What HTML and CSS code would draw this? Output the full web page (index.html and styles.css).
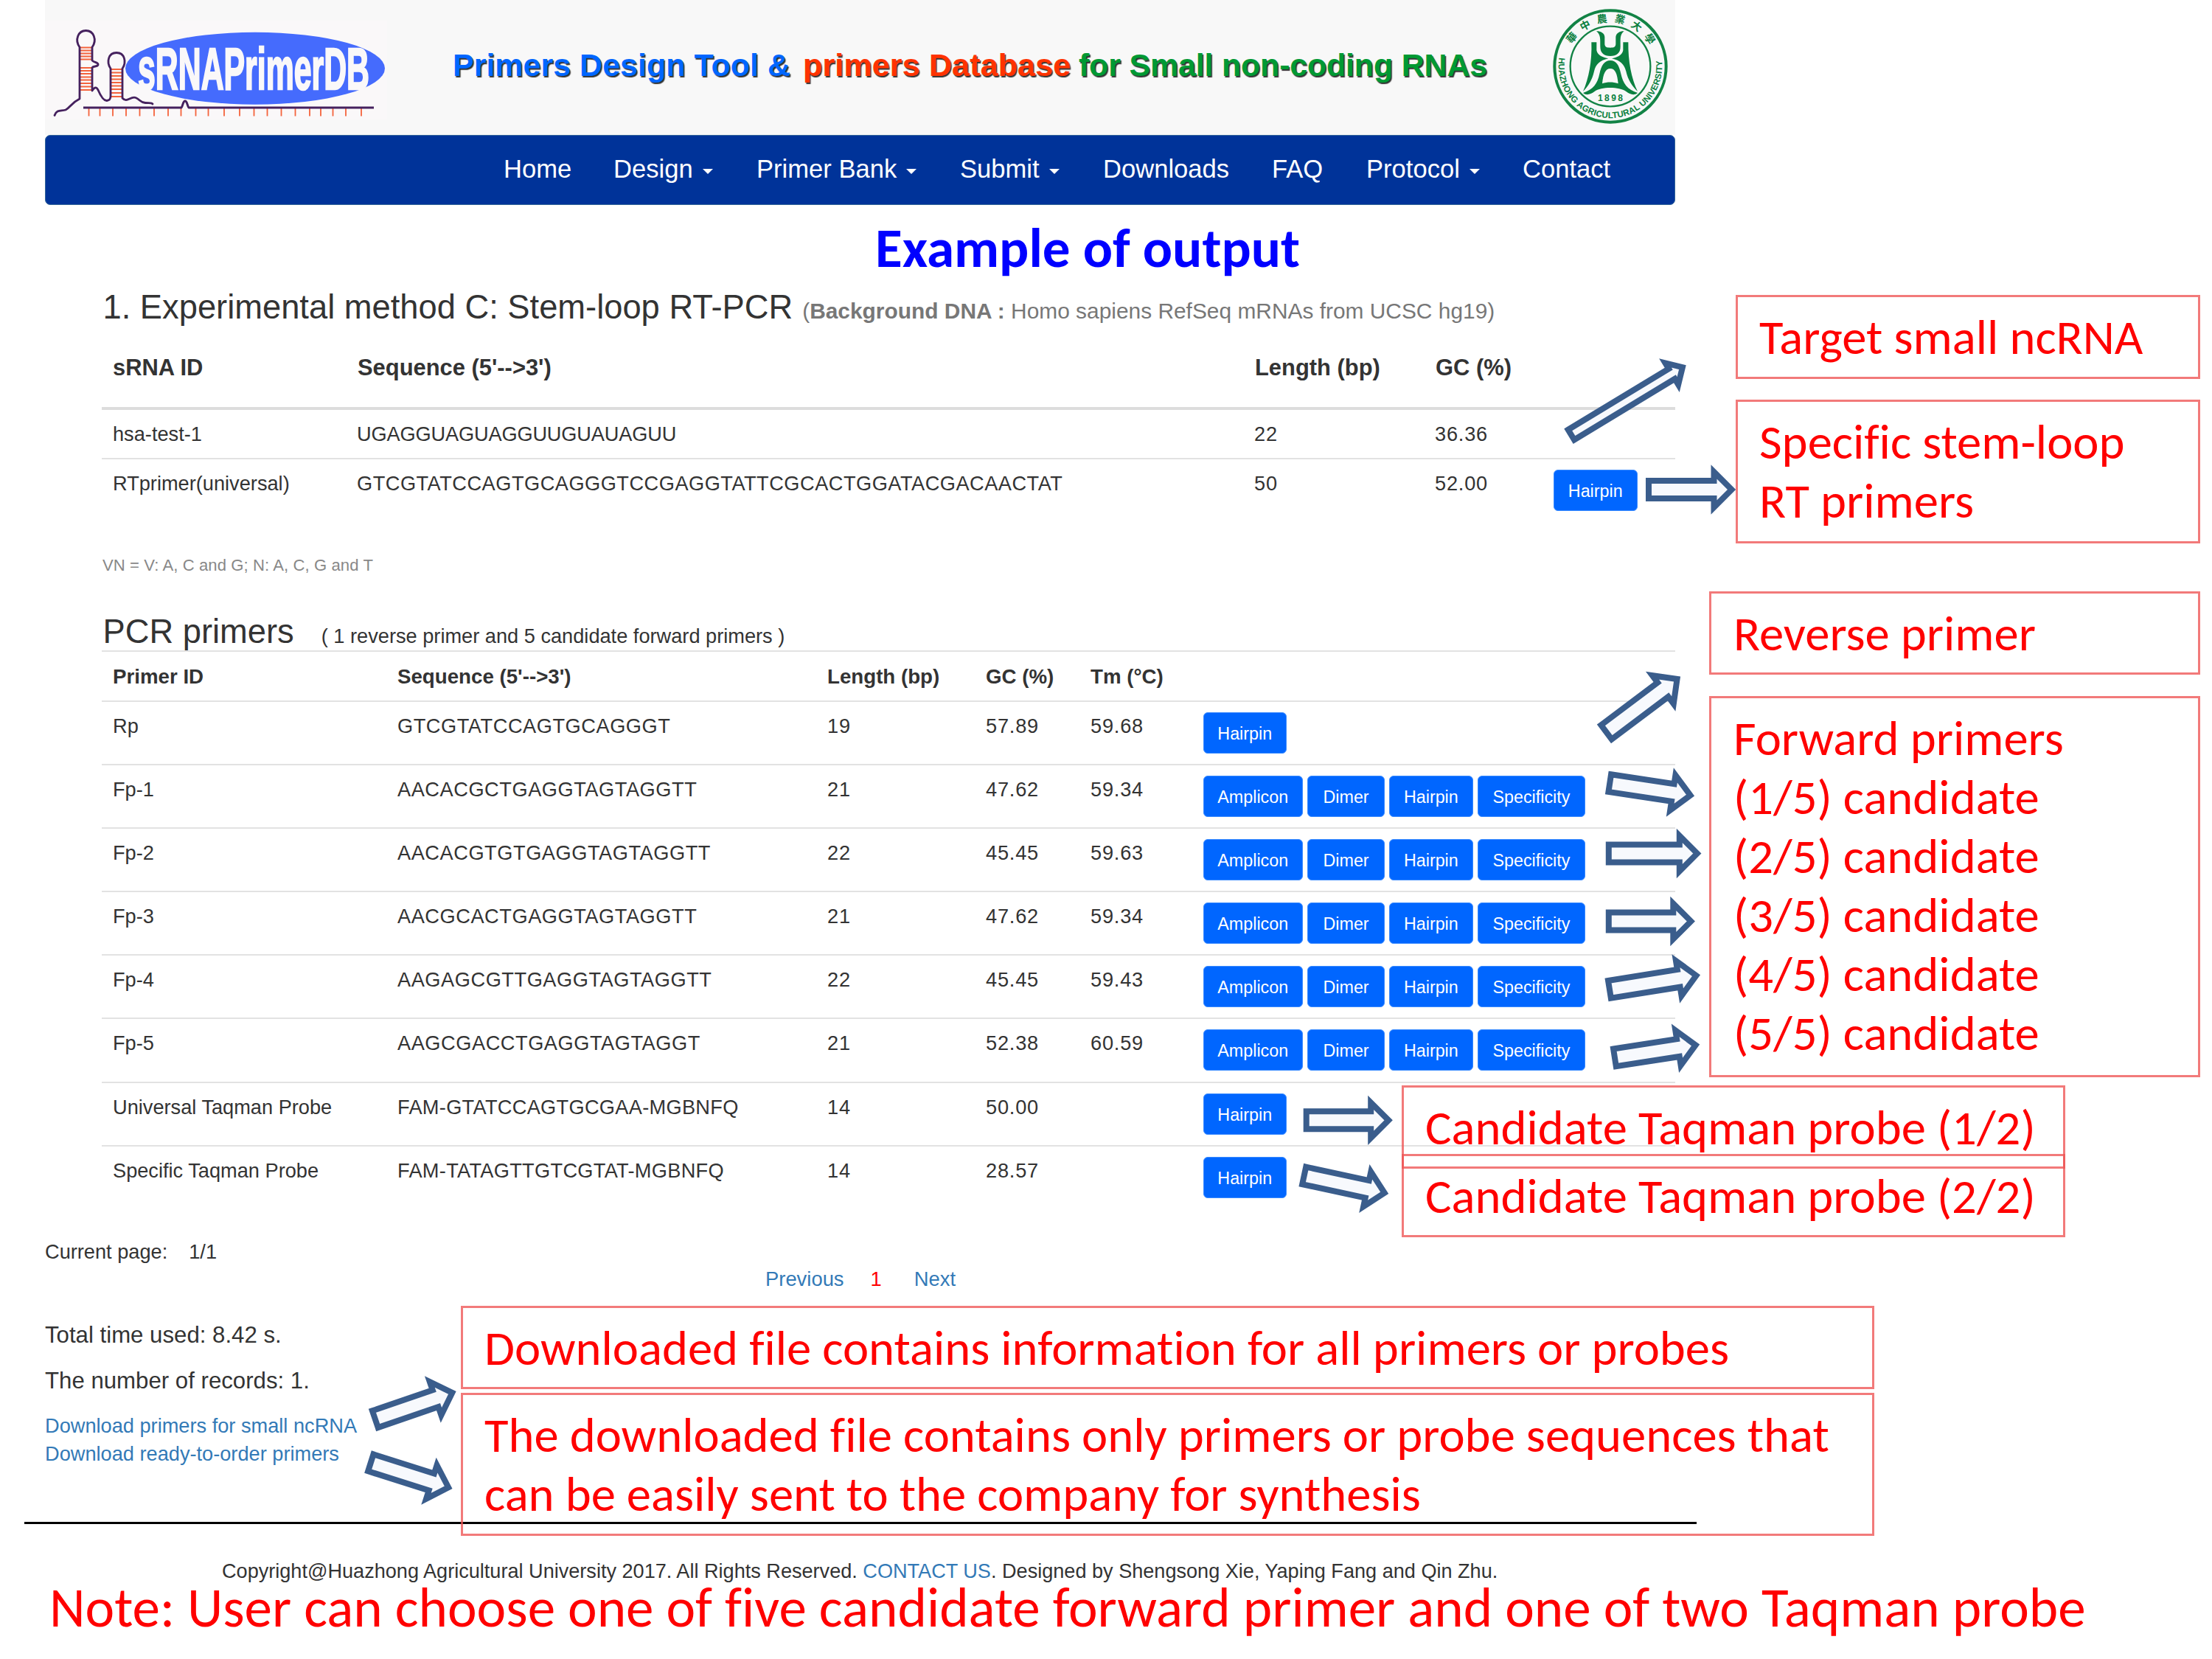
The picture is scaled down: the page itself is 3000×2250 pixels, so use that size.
FILE: index.html
```
<!DOCTYPE html>
<html lang="en">
<head>
<meta charset="utf-8">
<title>sRNAPrimerDB - Example of output</title>
<link rel="stylesheet" href="styles.css">
</head>
<body>
<div class="page">
  <div class="site">
    <header class="banner">
      <svg class="logo" viewBox="61 28 464 134" role="img" aria-label="sRNAPrimerDB">
        <rect x="61" y="28" width="464" height="134" fill="#faf8f9"/>
        <ellipse cx="346" cy="92.7" rx="176" ry="49" fill="#456bfd"/>
        <text class="logo-name" x="187" y="121" textLength="314" lengthAdjust="spacingAndGlyphs">sRNAPrimerDB</text>
        <g stroke="#f4633c" stroke-width="1.8">
          <path d="M109 64.500h15M109 68.500h15M109 72.500h15M109 76.500h15M109 80.500h15M109 92h15M109 96h15M109 100h15M109 104.500h15M109 108.500h15M109 113h15M109 117.500h15M109 122h15"/>
          <path d="M151 94h14M151 98.500h14M151 103h14M151 107.500h14M151 112h14M151 116.500h14M151 121h14M151 126h14M151 131h14"/>
          <path d="M120.500 147v10.500M135.500 147v10.500M153 147v10.500M171 147v10.500M189.500 147v10.500M209 147v10.500M228 147v10.500M245.500 147v10.500M265.500 147v10.500M282.500 147v10.500M304 147v10.500M325 147v10.500M344.500 147v10.500M362.500 147v10.500M381.500 147v10.500M400.500 147v10.500M420 147v10.500M435 147v10.500M451.500 147v10.500M469 147v10.500M490 147v10.500"/>
        </g>
        <g fill="none" stroke="#45215e" stroke-width="2.800" stroke-linecap="round" stroke-linejoin="round">
          <path d="M74 156.500C77 148 83 151 89 149C95 146 96 140 108 134V64C101 54 106 41.500 116.500 41.500C127 41.500 132 54 125 64V82C127 85 134 84 133 88C132 91 126 89 125 92V123C127 120 130 116 133 122C136 129 140 137 145 136.500C149 136 150 134 150 130V93C144 84 147 71.500 158 71.500C169 71.500 172 84 166 93V133C172 140 177 130 184 132.500C190 135 190 139 197 139.500C202 140 206 139 207 141"/>
          <path d="M113 146H246C248 144 248 137 251 137C254 137 254 144 256 146H507" stroke-linecap="butt" stroke-width="3"/>
        </g>
      </svg>
      <h1 class="tagline"><span class="tag-blue">Primers Design Tool &amp;</span><span class="tag-red">primers Database</span><span class="tag-green">for Small non-coding RNAs</span></h1>
      <svg class="emblem" viewBox="80 36 468 468" role="img" aria-label="Huazhong Agricultural University">
        <defs>
          <path id="arc-top" d="M134 270A180 180 0 0 1 494 270"/>
          <path id="arc-bottom" d="M106 234A211 211 0 1 0 522 234"/>
        </defs>
        <g fill="none" stroke="#128345">
          <circle cx="314" cy="270" r="227" stroke-width="12"/>
          <circle cx="314" cy="270" r="163" stroke-width="7"/>
        </g>
        <g fill="#0b8040">
          <path d="M257 127C272 126 290 134 291 150V178C291 192 300 194 314 194C328 194 336 192 336 178V150C338 134 355 126 370 127C352 140 355 160 355 190C355 216 340 228 314 228C288 228 273 216 273 190C273 160 275 140 257 127Z"/>
          <path d="M237 172H258V205C262 226 285 234 306 238C270 246 255 262 248 290C240 325 225 350 203 372C226 320 240 250 237 172Z"/>
          <path d="M387 172H366V205C362 226 340 234 320 238C356 246 370 262 378 290C386 325 402 350 425 372C400 320 386 250 387 172Z"/>
          <path fill-rule="evenodd" d="M203 378C245 364 262 340 270 300C277 266 290 246 314 246C338 246 350 266 357 300C366 340 382 364 425 378C410 390 394 384 378 372C350 352 276 352 250 372C234 384 216 390 203 378ZM281 340C302 333 324 333 346 340C342 300 334 279 314 279C294 279 285 300 281 340Z"/>
          <text class="emblem-year" x="314" y="412" textLength="102">1898</text>
          <text class="emblem-cn"><textPath href="#arc-top" startOffset="93">華中農業大學</textPath></text>
          <text class="emblem-en"><textPath href="#arc-bottom" textLength="722" lengthAdjust="spacing">HUAZHONG AGRICULTURAL UNIVERSITY</textPath></text>
        </g>
      </svg>
    </header>

    <nav class="nav">
      <a>Home</a>
      <a>Design<i class="caret"></i></a>
      <a>Primer Bank<i class="caret"></i></a>
      <a>Submit<i class="caret"></i></a>
      <a>Downloads</a>
      <a>FAQ</a>
      <a>Protocol<i class="caret"></i></a>
      <a>Contact</a>
    </nav>

    <h2 class="example">Example of output</h2>

    <main class="results">
      <h3 class="method">1. Experimental method C: Stem-loop RT-PCR<small>(<b>Background DNA :</b> Homo sapiens RefSeq mRNAs from UCSC hg19)</small></h3>
      <div class="srna">
        <div class="row head"><span>sRNA ID</span><span>Sequence (5'--&gt;3')</span><span>Length (bp)</span><span>GC (%)</span></div>
        <div class="row"><span>hsa-test-1</span><span class="rna">UGAGGUAGUAGGUUGUAUAGUU</span><span class="num">22</span><span class="num">36.36</span></div>
        <div class="row last"><span>RTprimer(universal)</span><span class="seq">GTCGTATCCAGTGCAGGGTCCGAGGTATTCGCACTGGATACGACAACTAT</span><span class="num">50</span><span class="num">52.00</span><span class="btns"><a class="btn hairpin">Hairpin</a></span></div>
      </div>
      <p class="legend">VN = V: A, C and G; N: A, C, G and T</p>

      <h3 class="pcr">PCR primers<small>( 1 reverse primer and 5 candidate forward primers )</small></h3>
      <div class="primers">
        <div class="row head"><span>Primer ID</span><span>Sequence (5'--&gt;3')</span><span>Length (bp)</span><span>GC (%)</span><span>Tm (°C)</span></div>
        <div class="row"><span>Rp</span><span class="seq">GTCGTATCCAGTGCAGGGT</span><span class="num">19</span><span class="num">57.89</span><span class="num">59.68</span><span class="btns"><a class="btn hairpin">Hairpin</a></span></div>
        <div class="row"><span>Fp-1</span><span class="seq">AACACGCTGAGGTAGTAGGTT</span><span class="num">21</span><span class="num">47.62</span><span class="num">59.34</span><span class="btns"><a class="btn amplicon">Amplicon</a><a class="btn dimer">Dimer</a><a class="btn hairpin">Hairpin</a><a class="btn specificity">Specificity</a></span></div>
        <div class="row"><span>Fp-2</span><span class="seq">AACACGTGTGAGGTAGTAGGTT</span><span class="num">22</span><span class="num">45.45</span><span class="num">59.63</span><span class="btns"><a class="btn amplicon">Amplicon</a><a class="btn dimer">Dimer</a><a class="btn hairpin">Hairpin</a><a class="btn specificity">Specificity</a></span></div>
        <div class="row"><span>Fp-3</span><span class="seq">AACGCACTGAGGTAGTAGGTT</span><span class="num">21</span><span class="num">47.62</span><span class="num">59.34</span><span class="btns"><a class="btn amplicon">Amplicon</a><a class="btn dimer">Dimer</a><a class="btn hairpin">Hairpin</a><a class="btn specificity">Specificity</a></span></div>
        <div class="row"><span>Fp-4</span><span class="seq">AAGAGCGTTGAGGTAGTAGGTT</span><span class="num">22</span><span class="num">45.45</span><span class="num">59.43</span><span class="btns"><a class="btn amplicon">Amplicon</a><a class="btn dimer">Dimer</a><a class="btn hairpin">Hairpin</a><a class="btn specificity">Specificity</a></span></div>
        <div class="row"><span>Fp-5</span><span class="seq">AAGCGACCTGAGGTAGTAGGT</span><span class="num">21</span><span class="num">52.38</span><span class="num">60.59</span><span class="btns"><a class="btn amplicon">Amplicon</a><a class="btn dimer">Dimer</a><a class="btn hairpin">Hairpin</a><a class="btn specificity">Specificity</a></span></div>
        <div class="row"><span>Universal Taqman Probe</span><span class="probe">FAM-GTATCCAGTGCGAA-MGBNFQ</span><span class="num">14</span><span class="num">50.00</span><span></span><span class="btns"><a class="btn hairpin">Hairpin</a></span></div>
        <div class="row last"><span>Specific Taqman Probe</span><span class="probe">FAM-TATAGTTGTCGTAT-MGBNFQ</span><span class="num">14</span><span class="num">28.57</span><span></span><span class="btns"><a class="btn hairpin">Hairpin</a></span></div>
      </div>
    </main>

    <p class="current"><span>Current page:</span><span>1/1</span></p>
    <div class="pager"><a>Previous</a><a class="active">1</a><a>Next</a></div>
    <div class="stats">
      <p>Total time used: 8.42 s.</p>
      <p>The number of records: 1.</p>
    </div>
    <div class="downloads">
      <a>Download primers for small ncRNA</a>
      <a>Download ready-to-order primers</a>
    </div>
  </div>

  <hr class="rule">
  <footer class="copyright">Copyright@Huazhong Agricultural University 2017. All Rights Reserved. <a>CONTACT US</a>. Designed by Shengsong Xie, Yaping Fang and Qin Zhu.</footer>
  <p class="note">Note: User can choose one of five candidate forward primer and one of two Taqman probe</p>

  <div class="callout c-target">Target small ncRNA</div>
  <div class="callout c-specific">Specific stem-loop<br>RT primers</div>
  <div class="callout c-reverse">Reverse primer</div>
  <div class="callout c-forward">Forward primers<br>(1/5) candidate<br>(2/5) candidate<br>(3/5) candidate<br>(4/5) candidate<br>(5/5) candidate</div>
  <div class="callout c-probe1">Candidate Taqman probe (1/2)</div>
  <div class="callout c-probe2">Candidate Taqman probe (2/2)</div>
  <div class="callout c-all">Downloaded file contains information for all primers or probes</div>
  <div class="callout c-order">The downloaded file contains only primers or probe sequences that<br>can be easily sent to the company for synthesis</div>

  <svg class="arrows" viewBox="0 0 3000 2250" aria-hidden="true">
    <path transform="translate(2127.500 591.700) rotate(-31.200)" d="M4-8H163.500V-17L180.500 0L163.500 17V8H4Z"/>
    <path transform="translate(2232 664)" d="M4-12H92.500V-24L116.500 0L92.500 24V12H4Z"/>
    <path transform="translate(2175.400 995.400) rotate(-36.900)" d="M4-12H100V-24L124 0L100 24V12H4Z"/>
    <path transform="translate(2179.300 1061.500) rotate(8.600)" d="M4-12H90.500V-24L114.500 0L90.500 24V12H4Z"/>
    <path transform="translate(2177.800 1157.500)" d="M4-12H100V-24L124 0L100 24V12H4Z"/>
    <path transform="translate(2177.800 1249.500)" d="M4-12H91.500V-24L115.500 0L91.500 24V12H4Z"/>
    <path transform="translate(2179 1342.500) rotate(-9.100)" d="M4-12H99V-24L123 0L99 24V12H4Z"/>
    <path transform="translate(2186 1435) rotate(-8.800)" d="M4-12H91V-24L115 0L91 24V12H4Z"/>
    <path transform="translate(1767.700 1519.300)" d="M4-12H91.500V-24L115.500 0L91.500 24V12H4Z"/>
    <path transform="translate(1764.800 1593.500) rotate(12.200)" d="M4-12H91.500V-24L115.500 0L91.500 24V12H4Z"/>
    <path transform="translate(505 1926) rotate(-18.900)" d="M4-12H90.500V-24L114.500 0L90.500 24V12H4Z"/>
    <path transform="translate(499 1982.600) rotate(17.600)" d="M4-12H90.500V-24L114.500 0L90.500 24V12H4Z"/>
  </svg>
</div>
</body>
</html>
```
FILE: styles.css
```
* { box-sizing: border-box; }
body { margin: 0; background: #fff; color: #333; font-family: "Liberation Sans", Arial, sans-serif; font-size: 27.2px; }
h1, h2, h3, p { margin: 0; font-weight: normal; }
a { color: #337ab7; text-decoration: none; }

.page { position: relative; width: 3000px; height: 2250px; overflow: hidden; white-space: nowrap; }
.site { width: 2211px; margin-left: 61px; }

/* banner */
.banner { display: flex; height: 183px; background: #f8f8f8; }
.logo { width: 464px; height: 134px; margin-top: 28px; flex: none; overflow: visible; }
.logo-name { font: bold 80px "Liberation Sans", sans-serif; fill: #faf8f9; stroke: #faf8f9; stroke-width: 2.5; }
.tagline { display: grid; grid-template-columns: 475px 374px auto; width: 1519px; padding-left: 89px; font-size: 43px; font-weight: bold; line-height: 176px; text-shadow: 1.5px 2px 1px #333; }
.tag-blue { color: #0066ff; }
.tag-red { color: #ff3300; letter-spacing: .15px; }
.tag-green { color: #009933; letter-spacing: -.2px; }
.emblem { width: 156px; height: 156px; margin: 12px 0 0 62px; flex: none; }
.emblem-year { font: bold 36px "Liberation Sans", sans-serif; text-anchor: middle; }
.emblem-cn { font: bold 42px "Noto Sans CJK TC", "Noto Sans CJK SC", sans-serif; letter-spacing: 26px; }
.emblem-en { font: bold 35px "Liberation Sans", sans-serif; }

/* navigation */
.nav { display: grid; grid-template-columns: 149px 194px 276px 194px 229px 128px 212px auto; height: 95px; padding-left: 621px; background: #003399; border: 1px solid #336699; border-radius: 7px; font-size: 34.6px; line-height: 91px; }
.nav a { color: #fff; }
.caret { display: inline-block; margin-left: 13px; vertical-align: 5px; border: 7px solid transparent; border-top: 7px solid #fff; border-bottom: 0; }

.example { height: 113px; padding-left: 1126px; font: bold 75.1px/116px Carlito, Calibri, Lato, sans-serif; color: #0000ff; }

/* result tables */
.results { padding-left: 77px; }
.results h3 { padding-left: 1.5px; font-size: 45.3px; line-height: 51px; }
.results h3 small { line-height: 1; }
.results .method { height: 50px; }
.method small { margin-left: 13px; font-size: 29.9px; color: #777; }
.results .pcr { height: 51px; line-height: 52px; }
.pcr small { margin-left: 37px; font-size: 27.2px; }

.row { display: grid; padding-left: 15px; line-height: 66px; }
.head { font-weight: bold; }
.seq { letter-spacing: .5px; }
.num { letter-spacing: .8px; }

.srna .row { grid-template-columns: 331px 1217px 245px 161px auto; height: 67px; line-height: 65px; border-bottom: 2px solid #e2e2e2; }
.srna .rna { letter-spacing: -.15px; }
.srna .head { grid-template-columns: 332px 1217px 245px auto; height: 115px; line-height: 115px; font-size: 30.9px; border-bottom: 4px solid #ddd; }
.srna .last { height: 72px; border: 0; }

.legend { height: 136px; padding-left: 1px; font-size: 22.1px; line-height: 144px; letter-spacing: .08px; color: #888; }

.primers { border-top: 2px solid #e2e2e2; }
.primers .row { grid-template-columns: 386px 583px 215px 142px 152.5px auto; height: 86.2px; border-bottom: 2px solid #e2e2e2; line-height: 66px; }
.primers .seq { letter-spacing: .55px; }
.primers .probe { letter-spacing: .3px; }
.primers .head { height: 67.5px; line-height: 67px; font-size: 27.7px; }
.primers .last { height: 84px; border: 0; }

.btns { display: flex; gap: 6.3px; padding-top: 14px; }
.btn { height: 56px; border: 1px solid #3a8bff; border-radius: 6px; background: #0066ff; color: #fff; font-size: 23.3px; line-height: 57px; text-align: center; }
.hairpin { width: 113.5px; }
.amplicon { width: 135.5px; }
.dimer { width: 104.5px; }
.specificity { width: 146px; }

/* paging and statistics */
.current { display: flex; gap: 29px; height: 75px; font-size: 27.2px; line-height: 117px; }
.pager { display: flex; height: 40px; padding-left: 977px; font-size: 27.4px; line-height: 41px; }
.pager .active { margin: 0 44px 0 36px; color: #ff0000; }
.stats { margin-top: 26px; font-size: 31.2px; line-height: 61.7px; }
.downloads { display: grid; margin-top: 12px; font-size: 27.2px; line-height: 37.3px; }

.rule { width: 2268px; height: 3px; margin: 74px 0 33px 33px; border: 0; background: #000; }
.copyright { padding-left: 301px; font-size: 27.1px; line-height: 61px; }
.note { margin-top: -27px; padding-left: 67px; font: 75.15px/92px Carlito, Calibri, Lato, sans-serif; color: #ff0000; }

/* annotations laid over the page */
.callout { position: absolute; padding: 14.5px 29px; border: 3px solid rgba(238, 85, 85, .78); font: 66.65px/80px Carlito, Calibri, Lato, sans-serif; color: #ff0000; }
.c-target { left: 2354px; top: 400px; width: 630px; height: 114px; }
.c-specific { left: 2354px; top: 542px; width: 630px; height: 195px; }
.c-reverse { left: 2318px; top: 802px; width: 666px; height: 113px; padding-left: 30px; }
.c-forward { left: 2318px; top: 944px; width: 666px; height: 517px; padding-left: 30px; }
.c-probe1 { left: 1901px; top: 1472px; width: 900px; height: 113px; }
.c-probe2 { left: 1901px; top: 1565px; width: 900px; height: 113px; }
.c-all { left: 625px; top: 1771px; width: 1917px; height: 113px; }
.c-order { left: 625px; top: 1889px; width: 1917px; height: 194px; }

.example, .note, .callout { font-variant-ligatures: none; }

.arrows { position: absolute; left: 0; top: 0; width: 3000px; height: 2250px; fill: #f7f9fd; stroke: #3a5d8c; stroke-width: 8; pointer-events: none; }
```
